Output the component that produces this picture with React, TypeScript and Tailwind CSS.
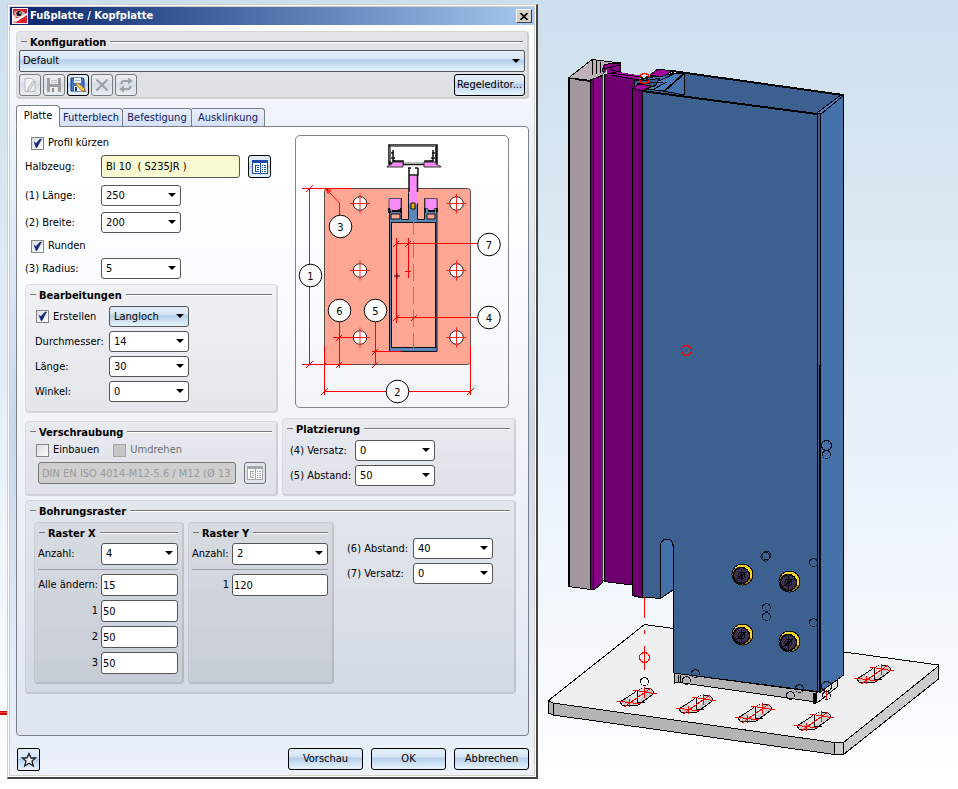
import type { ReactNode } from "react";

const FACE =
  "bg-[linear-gradient(to_bottom,#e3edf9_0%,#d9e8f6_35%,#b5cde9_48%,#c3d9f0_60%,#e6f5fe_100%)]";
const BOX = "rounded-[3px] border border-[#555] bg-white";

function Arrow({ className = "" }: { className?: string }) {
  return (
    <svg viewBox="0 0 8 4" className={"pointer-events-none absolute h-1 w-2 " + className} aria-hidden="true">
      <path d="M0 0H8L4 4Z" fill="#000" />
    </svg>
  );
}

function Combo({ id, value, width = "w-20", height = "h-[21px]", face = false }: { id: string; value: string; width?: string; height?: string; face?: boolean }) {
  return (
    <div className={"relative shrink-0 " + width + " " + height}>
      <select
        id={id}
        defaultValue={value}
        className={"block h-full w-full appearance-none pl-1 pr-4 rounded-[3px] border border-[#555] " + (face ? FACE : "bg-white")}
      >
        <option>{value}</option>
      </select>
      <Arrow className="right-[5px] top-2" />
    </div>
  );
}

function Row({ id, label, value, labelWidth, face }: { id: string; label: string; value: string; labelWidth: string; face?: boolean }) {
  return (
    <div className="flex items-center">
      <label htmlFor={id} className={"shrink-0 whitespace-nowrap " + labelWidth}>
        {label}
      </label>
      <Combo id={id} value={value} face={face} />
    </div>
  );
}

function Check({ label, checked = false, disabled = false }: { label: string; checked?: boolean; disabled?: boolean }) {
  return (
    <label className={"flex h-4 items-center gap-1 whitespace-nowrap " + (disabled ? "text-[#6b6e74]" : "")}>
      <span className="relative block size-[13px]">
        <input
          type="checkbox"
          defaultChecked={checked}
          disabled={disabled}
          className={"peer block size-[13px] appearance-none border " + (disabled ? "border-[#a5a5a5] bg-[#c6c6c6]" : "border-[#868686] bg-[linear-gradient(135deg,#d9dde2,#fdfdfd)]")}
        />
        <svg viewBox="0 0 13 13" className="pointer-events-none absolute inset-0 hidden size-[13px] peer-checked:block" aria-hidden="true">
          <path d="M3 5L5 6.500L9 2H10.500L6 10.500H5Z" fill="#13267a" stroke="#13267a" strokeWidth="0.500" />
        </svg>
      </span>
      {label}
    </label>
  );
}

function Group({ title, className = "", children }: { title: string; className?: string; children: ReactNode }) {
  return (
    <section className={"rounded-[4px] border border-r-2 border-b-2 border-black/5 border-r-black/10 border-b-black/10 bg-linear-to-b from-black/4 to-black/6 pt-[3px] " + className}>
      <div className="flex h-4 items-center gap-[3px] pl-1 pr-1">
        <span className="mb-1 h-px w-1.5 bg-[#777]" />
        <h2 className="font-bold whitespace-nowrap">{title}</h2>
        <span className="mb-1 ml-px h-px flex-1 bg-[#777] shadow-[0_1px_0_#fff]" />
      </div>
      {children}
    </section>
  );
}

function TableIcon() {
  return (
    <svg viewBox="0 0 16 16" className="size-4" aria-hidden="true" shapeRendering="crispEdges">
      <rect x="0.5" y="1.5" width="15" height="13" fill="#fff" stroke="currentColor" />
      <path d="M1 3h14" stroke="currentColor" strokeWidth="2" />
      <path d="M8.500 4v10" stroke="currentColor" />
      <path d="M3.500 6v6.500M3 6.500h4M5 8.500h2M5 10.500h2M3 12.500h4M10 6.500h1M12 6.500h2M10 8.500h1M12 8.500h2M10 10.500h1M12 10.500h2M10 12.500h1M12 12.500h2" stroke="currentColor" fill="none" />
    </svg>
  );
}

function ToolButton({ label, disabled = true, children }: { label: string; disabled?: boolean; children: ReactNode }) {
  return (
    <button
      aria-label={label}
      disabled={disabled}
      className={"flex size-[22px] items-center justify-center rounded-[3px] border " + (disabled ? "border-[#777b82] bg-linear-to-b from-[#edf0f4] via-[#d7dee7] to-[#e9eef3]" : "border-black " + FACE)}
    >
      <svg viewBox="0 0 16 16" className="size-4">
        {children}
      </svg>
    </button>
  );
}

function PushButton({ children, width = "w-[75px]" }: { children: ReactNode; width?: string }) {
  return <button className={"h-[22px] rounded-[3px] border border-black whitespace-nowrap " + width + " " + FACE}>{children}</button>;
}

/* Plan view of the base plate with the numbered dimensions. */
function PlatePreview() {
  const holes = [360, 456.5].flatMap((x) => [203.5, 270.5, 337.5].map((y) => [x, y]));
  const marks: [number, number, string][] = [
    [310.5, 275.5, "1"],
    [397.5, 391.5, "2"],
    [340.5, 226.5, "3"],
    [489, 317.5, "4"],
    [375.5, 310.5, "5"],
    [339.5, 310.5, "6"],
    [489, 244.5, "7"],
  ];
  return (
    <svg viewBox="296 136 212 271" className="block w-full" role="img" aria-label="Fußplatte">
      <rect x="324.500" y="188.500" width="146" height="176" rx="3" fill="#ffa794" stroke="#5a4a48" />
      {holes.map(([x, y]) => (
        <g key={x + "-" + y}>
          <circle cx={x} cy={y} r="6.800" fill="#fff" stroke="#222" />
          <path d={`M${x - 10} ${y}h20M${x} ${y - 10}v20`} stroke="#f22" fill="none" />
        </g>
      ))}
      <path d="M389.500 198.500h12v21h7v-27h9v27h7v-21h12.500v153h-47.500z" fill="#5c86b8" stroke="#111" />
      <rect x="391.500" y="222.500" width="44" height="125" fill="#ffa794" stroke="#111" />
      <path d="M402.500 199h5v19h-5zM418.500 199h5.500v19h-5.500z" fill="#ffa794" />
      <path d="M391 214h9v5h-9zM427 214h8v5h-8z" fill="#ffa794" stroke="#111" />
      <path d="M389 198.500h12v11h-3v2h-7v-2h-2zM425 198.500h12v10h-3v2h-6v-2h-3z" fill="#f98bfa" stroke="#555" />
      <path d="M389 208v4h2m10-4v5M425 208v5m12-5v4M392 211h8M428 211h7" stroke="#111" strokeWidth="2" fill="none" />
      <path d="M409 176h9v27l-2 2h-5l-2-2z" fill="#f98bfa" />
      <path d="M408 168h3M415 168h3M409 168v7h9v-7M409 175v17M417.500 175v17" fill="none" stroke="#111" strokeWidth="1.500" />
      <path d="M411 203h4v6h-4z" fill="#e5ac10" stroke="#111" />
      <path d="M389 145h48v19h-3v-3h-8v2h-23v-2h-10v3h-4z" fill="#fff" />
      <path d="M389.500 145.500h47v18h-4v-2h-7v2.500h-23v-2.500h-9v2h-4z" fill="none" stroke="#111" strokeWidth="2.600" />
      <path d="M390 146h46M390 147v14M404 163.500h21" stroke="#aaa" fill="none" />
      <path d="M393 150v10l3 2M433 150v10l-3 2M391 153h3M432 153h3M391 158h4M431 158h4" stroke="#111" strokeWidth="1.500" fill="none" />
      <path d="M387 166.500l5-2.500v-2h11v5h-16zM441 166.500l-5-2.500v-2h-12v5h17z" fill="#f98bfa" stroke="#333" />
      <path d="M413.500 218v138" stroke="#a17b6e" strokeDasharray="17 6" fill="none" />
      <g stroke="#f00" fill="none">
        <path d="M302 188.500h50M302 364.500h50M309.500 188v177M324.500 346v49M470.500 346v49M324 391.500h147" />
        <path d="M306 192l7-7M306 368l7-7M321 395l7-7M467 395l7-7" />
        <path d="M339.500 215v-12L327 190M326 189l5 1.500-3 3z" />
        <path d="M396.500 238v85M408.500 238v40M397 243.500h81M397 317.500h81M393 247l6-6M405 247l6-6M393 321l6-6M411 321l6-6M405 271.500h6" />
        <path d="M339.500 322v46M333 337.500h27M375.500 322v43M372 351.500h29M336 341l6-6M336 368l6-6M372 355l6-6M372 368l6-6" />
      </g>
      <path d="M394 276h6M397 273v6" stroke="#400" />
      {marks.map(([x, y, n]) => (
        <g key={n}>
          <circle cx={x} cy={y} r="11.300" fill="#fff" stroke="#000" />
          <text x={x} y={y + 4} textAnchor="middle" fontSize="11">
            {n}
          </text>
        </g>
      ))}
    </svg>
  );
}

function Slot({ x, y }: { x: number; y: number }) {
  return (
    <g transform={`translate(${x} ${y})`}>
      <path d="M-17 5L0-6L6-9L14-8L17-5L15-2L1 8L-7 9L-15 8Z" fill="#c9c9c9" stroke="#000" />
      <path d="M0-6L-10 2L0 5L10-5L6-9Z" fill="#e2e2e2" />
      <path d="M0-6V5L8 5" fill="none" stroke="#000" />
      <path d="M-20 4L4 7M-4-7L20-3M-13 10L14-9M-8 2V10M7-10V1" fill="none" stroke="#f00" />
    </g>
  );
}

function Bolt({ x, y }: { x: number; y: number }) {
  return (
    <g transform={`translate(${x} ${y})`}>
      <circle r="10.500" fill="#9c7908" stroke="#111" />
      <path d="M-9-6A11 11 0 0 1 10 4L6 3L-2-8Z" fill="#ffd52b" />
      <circle r="10.500" fill="none" stroke="#111" />
      <ellipse cx="-1" cy="1" rx="8" ry="8" fill="#3c3152" stroke="#0a0a0a" strokeWidth="1.500" />
      <circle cx="-1" cy="1" r="3.500" fill="none" stroke="#08080c" />
      <circle cx="-1" cy="1" r="1.500" fill="#08080c" />
      <path d="M-1-6V8M-6 5L4-3" stroke="#08080c" />
    </g>
  );
}

/* Mullion with base plate, shown in the drawing area behind the window. */
function Model() {
  const rings: [number, number, number][] = [
    [826.5, 445.5, 5], [826.5, 454.5, 4], [765.5, 556.5, 4.5], [766.5, 555.5, 4.5], [813.5, 562.5, 4],
    [766.5, 607.5, 4], [766.5, 616.5, 4], [813.5, 622.5, 4], [799.5, 688.5, 4], [790.5, 695.5, 4],
    [826.5, 686.5, 5], [826.5, 695.5, 4], [695.5, 673.5, 4], [686.5, 680.5, 4],
  ];
  return (
    <svg viewBox="0 0 958 789" preserveAspectRatio="xMinYMin meet" shapeRendering="crispEdges" className="absolute inset-0 h-full w-full" role="img" aria-label="3D-Modell">
      <path d="M0 713H8" stroke="#c40d10" strokeWidth="4" />
      <path d="M0 712.500H8" stroke="#ff3b3b" />
      <g stroke="#000" strokeLinejoin="round">
        <path d="M548.500 700.500L644.500 624.500L938.500 665L938.500 667L844 742L834 742.500L553 703Z" fill="#f0f0f0" />
        <path d="M548.500 700.500L553 703L834.500 742.500V754.500L553 715L548.500 713Z" fill="#b4b4b4" />
        <path d="M834.500 742.500H843.500L938.500 666V679L843.500 754.500H834.500Z" fill="#ccc" />
        <path d="M553 703V715M843.500 742.500V754" fill="none" />
        <path d="M674 673L816 692V702L683 683L674 682Z" fill="#b4b4b4" />
        <path d="M674.500 674V684M678.500 675V682M680.500 675V682" />
        <path d="M816 693L837 679V687L817 703Z" fill="#ddd" />
        <path d="M814.500 693V704" strokeWidth="3" />

        <path d="M568.500 78L592 59.500L620.500 63V73L602 75L590 81Z" fill="#bdb2b9" />
        <path d="M592.500 60V75M596.500 61V74M600.500 62V73" fill="none" />
        <path d="M568.500 78L591 81V589.500L568.500 586.500Z" fill="#a2979f" />
        <path d="M568.500 77V587M575 79L591 81" strokeWidth="2" />
        <path d="M604 65L612 63L620.500 63V74L611 74L602 71Z" fill="#8b008b" />
        <path d="M603 69L620 65M609 69L620 72" />
        <path d="M590.500 80L602 76V583L594 590L590.500 589Z" fill="#8b008b" />
        <path d="M590.500 80L593.500 82V590L590.500 589Z" fill="#6d006d" />
        <path d="M602 75L607 69V578L603 581Z" fill="#ccc7c9" stroke="#444" />
        <path d="M604.500 75L616 72L640 76L634 88L632 585L604.500 581.500Z" fill="#6f006f" />
        <path d="M605 75L618 72L642 76L640 79L620 77Z" fill="#a3009e" stroke="none" />
        <path d="M610 73L641 77M611 75L633 79" />
        <path d="M634 80L684.500 73L843 95L817 114L643 91Z" fill="#3c6191" />
        <path d="M663 91L684.500 73V95Z" fill="#4573ad" />
        <path d="M646 77L678 73L684 74L665 91L634 88Z" fill="#4a7dbb" />
        <path d="M634 80H650L660 78L655 86H634Z" fill="#3c6191" />
        <path d="M634 81L658 76M637 84L663 82M652 90L667 82M659 81L674 74M664 91L684 73M647 89L657 84M668 77L675 71" fill="none" />
        <path d="M650 75L658 69L672 71L668 74L661 77Z" fill="#a3009e" />
        <path d="M632.500 88L639 84L651 86L643 91Z" fill="#a3009e" />
        <path d="M684.500 73V95" />
        <path d="M632.500 88L642.500 91V598L632.500 595.500Z" fill="#6d006d" />
        <path d="M642.500 91L821 114V692L673.500 673V546Q673 539 666 539Q660.500 540 660.500 546V598.500L642.500 597Z" fill="#3c6191" />
        <path d="M660.500 598.500V546Q661 539 667 539Q673 540 673 546V590Z" fill="#4571a9" />
        <path d="M820.500 114L843.500 95V675L820.500 692Z" fill="#4571a9" />
        <path d="M817 113L841 95L843 96L821 114Z" fill="#4b80c9" />
        <path d="M817.500 114V693M820.500 114V693" fill="none" />
        <path d="M820 365V693" fill="none" strokeWidth="2" />
        <path d="M642 91L817 114M672 71L843 95" fill="none" strokeWidth="2" />
      </g>
      <Slot x={637} y={697} />
      <Slot x={696} y={704} />
      <Slot x={755} y={713} />
      <Slot x={814} y={721} />
      <Slot x={874} y={674} />
      <Bolt x={742.5} y={574.5} />
      <Bolt x={789.5} y={581.5} />
      <Bolt x={742.5} y={634.5} />
      <Bolt x={789.5} y={641.5} />
      {rings.map(([x, y, r]) => (
        <circle key={x + "-" + y} cx={x} cy={y} r={r} fill="none" stroke="#0a0f1a" />
      ))}
      <circle cx="644.500" cy="681.500" r="4" fill="#fff" stroke="#000" />
      <g fill="none" stroke="#f00">
        <path d="M644.500 597V618M644.500 630V634M644.500 646V670M826.500 690V699" />
        <circle cx="644.500" cy="657.500" r="5" />
        <circle cx="686.500" cy="350.500" r="5" />
        <circle cx="644.500" cy="78.500" r="5" strokeWidth="1.500" />
      </g>
      <path d="M640 77L649 80M641 80L648 77" stroke="#111" />
    </svg>
  );
}

function NumberField({ id, label, value, width = "w-[77px]" }: { id: string; label: string; value: string; width?: string }) {
  return (
    <div className="flex items-center gap-[3px]">
      <label htmlFor={id} className="min-w-0 flex-1 text-right whitespace-nowrap">
        {label}
      </label>
      <input id={id} defaultValue={value} className={"h-[22px] shrink-0 px-px " + BOX + " " + width} />
    </div>
  );
}

const TABS = [
  { name: "Platte", width: "w-11" },
  { name: "Futterblech", width: "w-[63px]" },
  { name: "Befestigung", width: "w-[69px]" },
  { name: "Ausklinkung", width: "w-[73px]" },
];

export default function App() {
  return (
    <main className="relative min-h-screen overflow-hidden bg-[linear-gradient(to_bottom,#cddfed_0%,#ebf2fb_60%,#f4f8fd_80%,#fff_100%)] pt-1 pl-[7px] font-['DejaVu_Sans_Condensed','Noto_Sans',sans-serif] text-[11px] leading-4 text-black">
      <Model />
      <div className="relative w-[531px] border border-[#d4d0c8] border-r-2 border-b-2 border-r-[#444] border-b-[#444] bg-white p-px">
        <div className="border border-[#d4d0c8] bg-[linear-gradient(to_bottom,#fff_0%,#eaf0fa_20%,#c8d8ed_55%,#dde7f6_80%,#edf2fb_100%)]">
          <header className="flex h-[18px] items-center bg-linear-to-r from-[#0a246a] to-[#a6caf0] pl-0.5 pr-0.5 text-white">
            <svg viewBox="0 0 16 16" className="mr-0.5 size-4" aria-hidden="true">
              <path d="M0 0H16V16H0Z" fill="#f6eaea" />
              <path d="M1 1H15V6L9 9L4 10L1 6Z" fill="#d91e2c" />
              <path d="M2 4Q7 1 12 4L14 7L8 9L3 9Z" fill="#c9b4b4" />
              <path d="M15 6V15H5L1 14Z" fill="#e0202e" />
              <path d="M1 13L15 5V7L4 14Z" fill="#fff" />
              <circle cx="7" cy="5.500" r="2.600" fill="#1c1416" />
              <circle cx="8" cy="5" r="0.800" fill="#fff" />
            </svg>
            <h1 className="flex-1 font-bold">Fußplatte / Kopfplatte</h1>
            <button aria-label="Schließen" className="flex h-3.5 w-4 items-center justify-center border border-white border-r-[#404040] border-b-[#404040] bg-[#d4d0c8]">
              <svg viewBox="0 0 8 7" className="h-[7px] w-2">
                <path d="M0.500 0L7.500 7M7.500 0L0.500 7" stroke="#000" strokeWidth="1.600" />
              </svg>
            </button>
          </header>

          <div className="pt-[7px] pr-[5px] pb-1 pl-1.5">
            <Group title="Konfiguration" className="-mt-px bg-[#eceef1] pb-px">
              <div className="relative mx-0.5 mt-[-1px]">
                <select aria-label="Konfiguration" defaultValue="Default" className={"block h-[22px] w-full appearance-none rounded-[2px] border border-[#555] pl-[3px] " + FACE}>
                  <option>Default</option>
                </select>
                <Arrow className="right-[5px] top-[9px]" />
              </div>
              <div className="mx-0.5 mt-0.5 flex gap-0.5">
                <ToolButton label="Neu">
                  <path d="M3 1.500h7l3 3v10h-10z" fill="#f4f4f4" stroke="#b4b8bd" />
                  <path d="M13 5L8 13L5 15L6 11L11 4Z" fill="#dcdcdc" stroke="#b9bcc0" />
                </ToolButton>
                <ToolButton label="Speichern">
                  <path d="M1 1h13l1 1v13H1z" fill="#9d9fa3" />
                  <path d="M4 1h8v6H4zM4 10h8v5H4z" fill="#ececec" />
                  <path d="M6 11h2v4H6z" fill="#85878b" />
                  <path d="M5 3.500h6M5 5.500h6" stroke="#c4c5c8" />
                </ToolButton>
                <ToolButton label="Speichern unter" disabled={false}>
                  <path d="M1 1h12l1 1v12H1z" fill="#3f74cf" stroke="#1a3d85" />
                  <path d="M4 1h7v5H4zM4 9h7v5H4z" fill="#eaf2fb" />
                  <path d="M5 3.500h5" stroke="#9db4d8" />
                  <path d="M5 10h2v4H5z" fill="#1a3d85" />
                  <path d="M6 6L8 6L15 12L13 15L7 9Z" fill="#f7c443" stroke="#9a6716" strokeWidth="0.600" />
                  <path d="M15 12L16 15L13 15Z" fill="#a5552c" />
                </ToolButton>
                <ToolButton label="Löschen">
                  <path d="M2.500 2.500L13.500 13.500M13.500 2.500L2.500 13.500" stroke="#999da3" strokeWidth="2" />
                </ToolButton>
                <ToolButton label="Aktualisieren">
                  <path d="M3 7Q4 3 9 4H11M13 9Q12 13 7 12H5" fill="none" stroke="#9da1a6" strokeWidth="2" />
                  <path d="M10 0.500L15 4L10 7.500ZM6 8.500L1 12L6 15.500Z" fill="#9da1a6" />
                </ToolButton>
                <div className="flex-1" />
                <PushButton width="w-[71px]">Regeleditor...</PushButton>
              </div>
            </Group>

            <nav role="tablist" className="mt-1.5 flex items-end">
              {TABS.map((t, i) => (
                <button
                  key={t.name}
                  role="tab"
                  aria-selected={i === 0}
                  className={
                    t.width + " whitespace-nowrap border border-[#7c7f86] " +
                    (i === 0 ? "relative z-10 -mb-px h-[22px] rounded-t-[4px] border-b-white bg-white text-black" : "h-[18px] rounded-tr-[3px] border-b-0 border-l-0 bg-linear-to-b from-[#e9effa] to-[#d5e0f8] text-[#0b1766]")
                  }
                >
                  {t.name}
                </button>
              ))}
            </nav>

            <div className="rounded-[4px] rounded-tl-none border border-[#7c7f86] bg-[linear-gradient(to_bottom,#fff_0%,#fbfcfe_25%,#f0f3f9_52%,#dfe6f1_100%)] pt-2 pr-3 pb-[41px] pl-2">
              <div className="flex gap-1">
                <div className="w-[253px] shrink-0">
                  <div className="pl-1.5">
                    <Check label="Profil kürzen" checked />
                  </div>
                  <div className="mt-1 flex items-center">
                    <label htmlFor="halbzeug" className="w-[76px]">
                      Halbzeug:
                    </label>
                    <input id="halbzeug" readOnly value="Bl 10  ( S235JR )" className="h-[23px] w-[139px] rounded-[3px] border border-[#555] bg-[#f9f9d2] px-1 whitespace-pre" />
                    <button aria-label="Halbzeug wählen" className={"ml-2 flex size-[23px] items-center justify-center rounded-[3px] border border-black text-[#1e4ba6] " + FACE}>
                      <TableIcon />
                    </button>
                  </div>
                  <div className="mt-[7px] flex flex-col gap-1.5">
                    <Row id="laenge" label="(1) Länge:" value="250" labelWidth="w-[76px]" />
                    <Row id="breite" label="(2) Breite:" value="200" labelWidth="w-[76px]" />
                  </div>
                  <div className="mt-[5px] pl-1.5">
                    <Check label="Runden" checked />
                  </div>
                  <div className="mt-1">
                    <Row id="radius" label="(3) Radius:" value="5" labelWidth="w-[76px]" />
                  </div>
                  <Group title="Bearbeitungen" className="mt-[5px] pb-[9px]">
                    <div className="mt-0.5 flex flex-col gap-1 pl-[9px]">
                      <div className="flex items-center">
                        <div className="w-[74px] pl-px">
                          <Check label="Erstellen" checked />
                        </div>
                        <Combo id="form" value="Langloch" face />
                      </div>
                      <Row id="durchmesser" label="Durchmesser:" value="14" labelWidth="w-[74px]" />
                      <Row id="lochlaenge" label="Länge:" value="30" labelWidth="w-[74px]" />
                      <Row id="winkel" label="Winkel:" value="0" labelWidth="w-[74px]" />
                    </div>
                  </Group>
                  <Group title="Verschraubung" className="mt-2 pb-2.5">
                    <div className="mt-px flex gap-3.5 pl-2.5">
                      <Check label="Einbauen" />
                      <Check label="Umdrehen" disabled />
                    </div>
                    <div className="mt-1 flex gap-2 pl-3">
                      <input aria-label="Schraube" disabled value="DIN EN ISO 4014-M12-5.6 / M12 (Ø 13)" className="h-[22px] w-[198px] rounded-[3px] border border-[#777] bg-[#cfcfcf] px-[3px] text-[#9a9a9a]" />
                      <button aria-label="Schraube wählen" disabled className="flex size-[22px] items-center justify-center rounded-[3px] border border-[#70757c] bg-[#dde4ec] text-[#a3a6aa]">
                        <TableIcon />
                      </button>
                    </div>
                  </Group>
                </div>

                <div className="flex flex-1 flex-col justify-between">
                  <div className="mr-[7px] ml-[13px] rounded-[5px] border border-[#808388]">
                    <PlatePreview />
                  </div>
                  <Group title="Platzierung" className="pb-2">
                    <div className="mt-0.5 flex flex-col gap-1 pl-[7px]">
                      <Row id="versatz4" label="(4) Versatz:" value="0" labelWidth="w-[65px]" />
                      <Row id="abstand5" label="(5) Abstand:" value="50" labelWidth="w-[65px]" />
                    </div>
                  </Group>
                </div>
              </div>

              <Group title="Bohrungsraster" className="mt-1 pb-2">
                <div className="mt-0.5 flex gap-1 pl-2">
                  <Group title="Raster X" className="w-[150px] pb-2">
                    <div className="mt-px flex flex-col gap-1 pr-1 pl-[3px]">
                      <div className="flex items-center justify-between">
                        <label htmlFor="anzahlx">Anzahl:</label>
                        <Combo id="anzahlx" value="4" width="w-[77px]" height="h-[22px]" />
                      </div>
                      <hr className="border-[#9fa2a8]" />
                      <NumberField id="alle" label="Alle ändern:" value="15" />
                      <NumberField id="x1" label="1" value="50" />
                      <NumberField id="x2" label="2" value="50" />
                      <NumberField id="x3" label="3" value="50" />
                    </div>
                  </Group>
                  <Group title="Raster Y" className="w-[146px]">
                    <div className="mt-px flex flex-col gap-1 pr-1 pl-[3px]">
                      <div className="flex items-center justify-between">
                        <label htmlFor="anzahly">Anzahl:</label>
                        <Combo id="anzahly" value="2" width="w-24" height="h-[22px]" />
                      </div>
                      <hr className="border-[#9fa2a8]" />
                      <NumberField id="y1" label="1" value="120" width="w-24" />
                    </div>
                  </Group>
                  <div className="mt-4 ml-[9px] flex flex-col gap-1">
                    <Row id="abstand6" label="(6) Abstand:" value="40" labelWidth="w-[66px]" />
                    <Row id="versatz7" label="(7) Versatz:" value="0" labelWidth="w-[66px]" />
                  </div>
                </div>
              </Group>
            </div>

            <footer className="mt-3 flex items-start gap-2">
              <button aria-label="Favoriten" className={"ml-px flex size-[23px] items-center justify-center rounded-[2px] border border-black " + FACE}>
                <svg viewBox="0 0 16 16" className="size-4">
                  <path d="M8 1.500L10 6H14.500L11 9L12.300 14L8 11.200L3.700 14L5 9L1.500 6H6Z" fill="#eef5fc" stroke="#222" strokeWidth="1.300" />
                </svg>
              </button>
              <div className="flex-1" />
              <PushButton>Vorschau</PushButton>
              <PushButton>OK</PushButton>
              <PushButton>Abbrechen</PushButton>
            </footer>
          </div>
        </div>
      </div>
    </main>
  );
}
